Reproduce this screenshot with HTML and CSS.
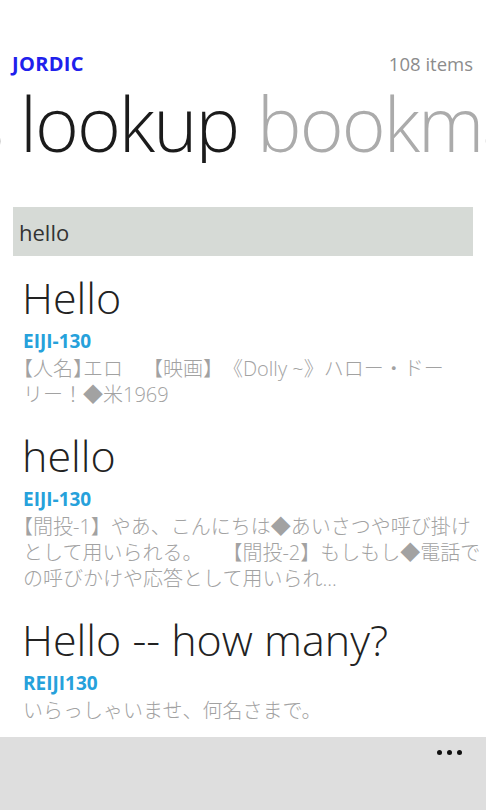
FILE: index.html
```html
<!DOCTYPE html>
<html lang="ja">
<head>
<meta charset="utf-8">
<title>JORDIC</title>
<link rel="stylesheet" href="styles.css">
</head>
<body>
<div class="page">
  <main class="main">
    <header class="top">
      <div class="app-name">JORDIC</div>
      <div class="count">108 items</div>
    </header>
    <div class="pivot">
      <span class="pivot-item prev">s</span>
      <span class="pivot-item active">lookup</span>
      <span class="pivot-item next">bookmarks</span>
    </div>
    <div class="search">hello</div>
    <ul class="results">
      <li class="entry">
        <div class="word">Hello</div>
        <div class="dict">EIJI-130</div>
        <div class="def">
          <span class="line"><span class="half">【</span>人名<span class="half">】</span>エロ　【映画】《Dolly ~》ハロー・ドー</span>
          <span class="line">リー！◆米1969</span>
        </div>
      </li>
      <li class="entry">
        <div class="word">hello</div>
        <div class="dict">EIJI-130</div>
        <div class="def">
          <span class="line"><span class="half">【</span>間投-1】やあ、こんにちは◆あいさつや呼び掛け</span>
          <span class="line">として用いられる。　【間投-2】もしもし◆電話で</span>
          <span class="line">の呼びかけや応答として用いられ...</span>
        </div>
      </li>
      <li class="entry">
        <div class="word">Hello -- how many?</div>
        <div class="dict">REIJI130</div>
        <div class="def">
          <span class="line">いらっしゃいませ、何名さまで。</span>
        </div>
      </li>
    </ul>
  </main>
  <footer class="appbar">
    <div class="more"><span class="dot"></span><span class="dot"></span><span class="dot"></span></div>
  </footer>
</div>
</body>
</html>
```
FILE: styles.css
```css
html, body {
  margin: 0;
  padding: 0;
  background: #ffffff;
}
body {
  font-family: "Open Sans", "Noto Sans CJK JP", sans-serif;
}
.page {
  width: 486px;
  height: 810px;
  display: flex;
  flex-direction: column;
  overflow: hidden;
}
.main {
  flex: 1;
  overflow: hidden;
}
.top {
  display: flex;
  justify-content: space-between;
  align-items: baseline;
  padding: 52px 13px 0 12px;
  height: 24px;
}
.app-name {
  font-weight: 700;
  font-size: 20px;
  line-height: 24px;
  letter-spacing: 0.3px;
  color: #2020ec;
}
.count {
  font-size: 18.5px;
  line-height: 24px;
  color: #8c8c8c;
}
.pivot {
  display: flex;
  gap: 18px;
  margin-top: 7px;
  white-space: nowrap;
  overflow: hidden;
  font-weight: 300;
  font-size: 75px;
  line-height: 80px;
  letter-spacing: -2px;
  color: #ababab;
}
.pivot-item.prev {
  margin-left: -31px;
}
.pivot-item.next {
  margin-left: 1px;
}
.pivot-item.active {
  color: #1b1b1b;
}
.search {
  margin: 44px 13px 0 13px;
  height: 49px;
  box-sizing: border-box;
  padding: 2px 0 0 6px;
  line-height: 47px;
  font-size: 22px;
  color: #333333;
  background: #d6dad6;
}
.results {
  list-style: none;
  margin: 13px 0 0 0;
  padding: 0 0 0 23px;
}
.entry {
  margin-bottom: 19px;
}
.word {
  font-size: 43px;
  font-weight: 300;
  line-height: 58px;
  color: #222222;
  margin-left: -1px;
  white-space: nowrap;
}
.dict {
  margin-top: 2px;
  font-weight: 700;
  font-size: 19px;
  line-height: 24px;
  color: #26a1db;
}
.def {
  margin-top: 3px;
  font-size: 20px;
  font-weight: 300;
  line-height: 26px;
  color: #a2a2a2;
  text-spacing-trim: space-all;
}
.line {
  display: block;
  white-space: nowrap;
}
.half {
  font-feature-settings: "halt" 1;
}
.appbar {
  flex: 0 0 73px;
  background: #dedede;
  display: flex;
  justify-content: flex-end;
  align-items: flex-start;
  padding: 13px 24px 0 0;
  box-sizing: border-box;
}
.more {
  display: flex;
  gap: 5px;
}
.dot {
  width: 5px;
  height: 5px;
  border-radius: 50%;
  background: #111111;
}
```
